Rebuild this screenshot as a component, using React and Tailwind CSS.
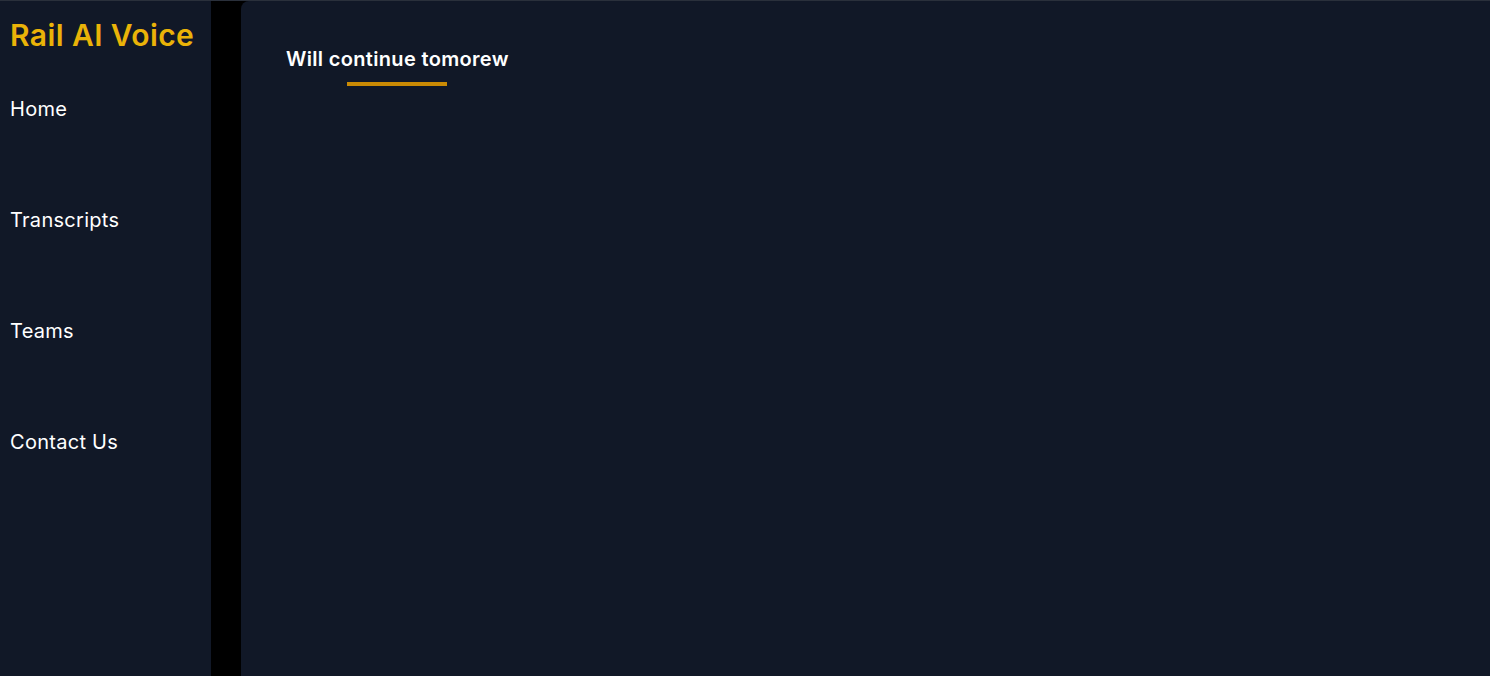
export default function App() {
  const nav = ["Home", "Transcripts", "Teams", "Contact Us"];
  return (
    <div
      className="flex h-[676px] w-full overflow-hidden border-t border-[#2a303b] bg-black"
      style={{ fontFamily: "Inter, 'Noto Sans', sans-serif" }}
    >
      <aside className="w-[211px] shrink-0 bg-[#111827] pl-[10px]">
        <h1 className="pt-[16px] text-[30px] leading-[36px] font-semibold tracking-[0.4px] text-[#eab308]">
          Rail AI Voice
        </h1>
        <ul>
          {nav.map((n) => (
            <li key={n} className="flex h-[111px] items-center text-[20px] leading-[28px] tracking-[0.28px] text-white">
              {n}
            </li>
          ))}
        </ul>
      </aside>
      <div className="w-[30px] shrink-0 bg-black" />
      <main className="flex-1 rounded-tl-lg bg-[#111827] pl-[45px] pt-[44px]">
        <div className="inline-flex flex-col items-center">
          <h2 className="text-[20px] leading-[28px] font-semibold tracking-[0.33px] text-white">Will continue tomorew</h2>
          <div className="mt-[9px] h-1 w-[100px] bg-[#ca8a04]" />
        </div>
      </main>
    </div>
  );
}
